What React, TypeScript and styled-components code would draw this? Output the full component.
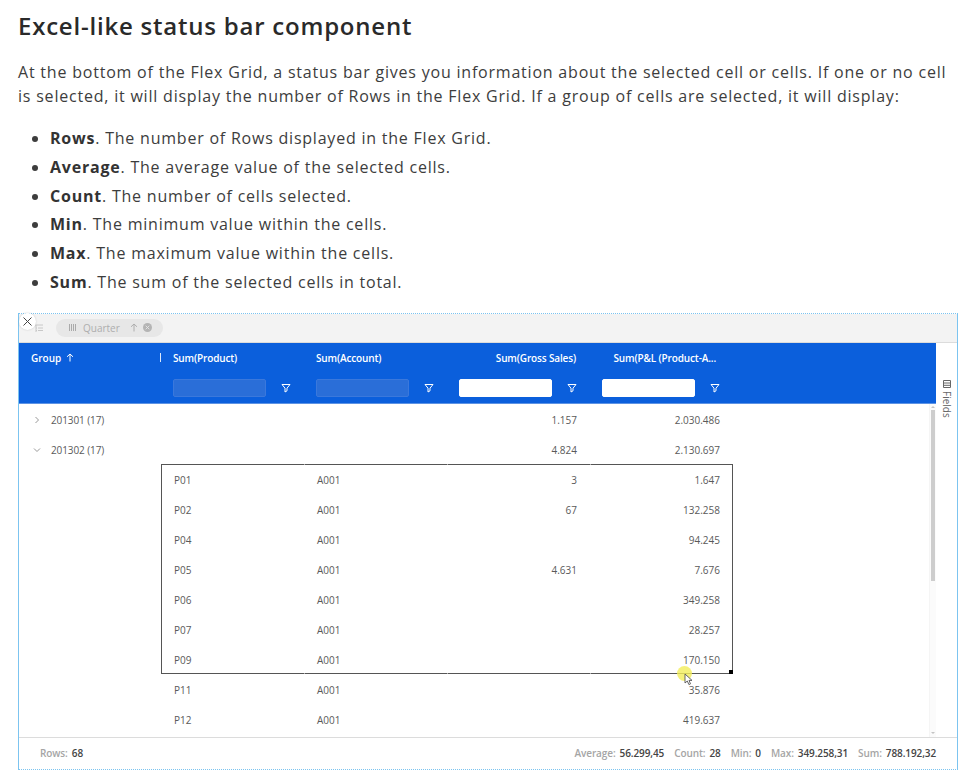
import React from 'react';
import styled, { createGlobalStyle } from 'styled-components';

const Global = createGlobalStyle`
  html, body { margin: 0; padding: 0; background: #fff; }
  body { font-family: "Open Sans", "Liberation Sans", sans-serif; width: 965px; height: 776px; overflow: hidden; }
`;
const Page = styled.div`padding: 11px 7px 0 18px; width: 965px; box-sizing: border-box;`;
const Title = styled.h2`margin: 0; font-size: 24px; line-height: 30px; font-weight: 600; letter-spacing: 0.78px; color: #2a2a2a;`;
const Intro = styled.p`margin: 19px 0 0; font-size: 16px; line-height: 24px; letter-spacing: 0.79px; color: #3d3d3d; width: 940px; white-space: nowrap;`;
const Bullets = styled.ul`margin: 16px 0 0; padding: 0 0 0 32px; list-style: disc; font-size: 16px; line-height: 28.8px; letter-spacing: 0.78px; color: #3d3d3d;`;
const Strong = styled.strong`font-weight: 700; color: #333;`;

const Widget = styled.div`
  position: relative; margin-top: 16px; width: 940px; height: 457px; box-sizing: border-box;
  border: 1px dotted #7cc4f0; border-left: 1px solid #7cc4f0; border-right: 1px solid #7cc4f0;
  display: flex; flex-direction: column;
`;
const GroupBar = styled.div`height: 29px; box-sizing: border-box; background: #f3f3f3; border-bottom: 1px solid #dcdcdc; display: flex; align-items: center; padding-left: 16px; gap: 13px; flex: none;`;
const BarIcon = styled.svg`width: 8px; height: 9px; color: #c8c8c8; flex: none; margin-top: 2px;`;
const Chip = styled.div`height: 18px; width: 107px; border-radius: 9px; background: #e7e7e7; display: flex; align-items: center; padding: 0 11px 0 13px; box-sizing: border-box; font-size: 10px; color: #aeaeae; gap: 5px;`;
const Grip = styled.svg`width: 7px; height: 7px; flex: none; margin-right: 2px;`;
const ChipText = styled.span`flex: 1;`;
const Middle = styled.div`display: flex; flex: 1; min-height: 0;`;
const Main = styled.div`flex: 1; display: flex; flex-direction: column; min-width: 0;`;
const Side = styled.div`width: 21px; flex: none; display: flex; justify-content: center; padding-top: 37px; box-sizing: border-box;`;
const SideLabel = styled.div`writing-mode: vertical-rl; display: flex; align-items: center; gap: 3px; font-size: 10px; color: #666; height: 40px;`;
const Header = styled.div`background: #0b5fdc; height: 61px; border-bottom: 1px solid #5d93e4; box-sizing: border-box; flex: none;`;
const Columns = styled.div`display: grid; grid-template-columns: 142px 143px 143px 143px 143px 1fr;`;
const HeadRow = styled(Columns)`height: 30px; align-items: center;`;
const FilterRow = styled(Columns)`height: 24px; margin-top: 6px; align-items: start;`;
const HeadCell = styled.div<{ $right?: boolean; $end?: number }>`
  position: relative; color: #fff; font-size: 10px; font-weight: 600; letter-spacing: -0.14px;
  padding: 0 ${p => p.$end ?? 13}px 0 12px; white-space: nowrap; display: flex; align-items: center; gap: 5px;
  justify-content: ${p => (p.$right ? 'flex-end' : 'flex-start')};
`;
const GroupHead = styled(HeadCell)`padding-left: 12px; letter-spacing: 0;`;
const Resizer = styled.span`position: absolute; right: 0; top: 2px; width: 1px; height: 9px; background: #dbe7fa;`;
const FilterCell = styled.div`display: flex; align-items: center; padding-left: 12px; gap: 15px;`;
const FilterInput = styled.div<{ $light?: boolean }>`width: 93px; height: 18px; border-radius: 2px; box-sizing: border-box; background: ${p => (p.$light ? '#fff' : '#2a6ed8')}; border: 1px solid ${p => (p.$light ? '#fff' : '#3a78dc')};`;
const FilterIcon = styled.svg`width: 10px; height: 10px; color: #fff; flex: none;`;
const Body = styled.div`position: relative; flex: 1; padding-top: 1px; background: #fff; min-height: 0; overflow: hidden;`;
const Row = styled(Columns)`height: 30px; align-items: center; font-size: 10px; color: #5a5a5a;`;
const Cell = styled.div<{ $right?: boolean }>`padding: 0 13px 0 13px; text-align: ${p => (p.$right ? 'right' : 'left')}; white-space: nowrap;`;
const GroupCell = styled.div`display: flex; align-items: center; padding-left: 14px; gap: 10px; letter-spacing: -0.1px;`;
const Chevron = styled.svg`width: 8px; height: 8px; color: #999; flex: none;`;
const ScrollTrack = styled.div`position: absolute; right: 0; top: 0; bottom: 0; width: 7px; background: #fbfbfb; border-left: 1px solid #f5f5f5; box-sizing: border-box;`;
const ScrollThumb = styled.div`position: absolute; right: 1px; top: 6px; width: 4px; height: 171px; background: #cdcdcd;`;
const ScrollArrow = styled.div<{ $down?: boolean }>`
  position: absolute; right: 1px; width: 0; height: 0; border-left: 2px solid transparent; border-right: 2px solid transparent;
  ${p => (p.$down ? 'bottom: 3px; border-top: 2px solid #c4c4c4;' : 'top: 2px; border-bottom: 2px solid #c4c4c4;')}
`;
const Selection = styled.div`position: absolute; left: 142px; top: 60px; width: 572px; height: 210px; box-sizing: border-box; border: 1px solid #555;`;
const Gap = styled.span<{ $left: number }>`position: absolute; left: ${p => p.$left}px; top: -1px; bottom: -1px; width: 1px; background: linear-gradient(#aaa 1px, transparent 1px, transparent calc(100% - 1px), #aaa calc(100% - 1px));`;
const Handle = styled.div`position: absolute; right: -1px; bottom: -1px; width: 4px; height: 4px; background: #000;`;
const Spot = styled.div`position: absolute; left: 658px; top: 262px; width: 15px; height: 15px; border-radius: 50%; background: rgba(243, 238, 90, 0.8);`;
const Cursor = styled.svg`position: absolute; left: 665px; top: 269px; width: 9px; height: 13px;`;
const Footer = styled.div`height: 31px; flex: none; border-top: 1px solid #dcdcdc; display: flex; align-items: center; justify-content: space-between; padding: 0 21px; font-size: 10px; font-weight: 600; letter-spacing: -0.1px; color: #444;`;
const Stats = styled.div`display: flex; gap: 10px;`;
const Stat = styled.span`display: inline-flex; gap: 4px;`;
const Label = styled.span`color: #a5a5a5;`;
const Close = styled.div`position: absolute; left: 0; top: -1px; width: 17px; height: 17px; border-radius: 50%; background: #fff; box-shadow: 0 0 2px rgba(0,0,0,.18); display: flex; align-items: center; justify-content: center;`;
const CloseIcon = styled.svg`width: 11px; height: 11px; color: #444;`;

const Filter = () => (
  <FilterIcon viewBox="0 0 10 10"><path d="M1 1.5h8L6 5.2v2.6L4 9V5.2z" fill="none" stroke="currentColor" strokeWidth="1" /></FilterIcon>
);
const Up = () => (
  <svg width="8" height="9" viewBox="0 0 8 9"><path d="M4 8.5V1M1 3.8 4 1l3 2.8" fill="none" stroke="currentColor" strokeWidth="1" /></svg>
);

const rows = [
  ['P01', 'A001', '3', '1.647'], ['P02', 'A001', '67', '132.258'], ['P04', 'A001', '', '94.245'],
  ['P05', 'A001', '4.631', '7.676'], ['P06', 'A001', '', '349.258'], ['P07', 'A001', '', '28.257'],
  ['P09', 'A001', '', '170.150'], ['P11', 'A001', '', '35.876'], ['P12', 'A001', '', '419.637'],
];
const bullets = [
  ['Rows', ' The number of Rows displayed in the Flex Grid.'],
  ['Average', ' The average value of the selected cells.'],
  ['Count', ' The number of cells selected.'],
  ['Min', ' The minimum value within the cells.'],
  ['Max', ' The maximum value within the cells.'],
  ['Sum', ' The sum of the selected cells in total.'],
];
const stats = [['Average:', '56.299,45'], ['Count:', '28'], ['Min:', '0'], ['Max:', '349.258,31'], ['Sum:', '788.192,32']];

export default function App() {
  return (
    <Page>
      <Global />
      <Title>Excel-like status bar component</Title>
      <Intro>
        At the bottom of the Flex Grid, a status bar gives you information about the selected cell or cells. If one or no cell<br />
        is selected, it will display the number of Rows in the Flex Grid. If a group of cells are selected, it will display:
      </Intro>
      <Bullets>
        {bullets.map(([a, b]) => <li key={a}><Strong>{a}</Strong>.{b}</li>)}
      </Bullets>
      <Widget>
        <GroupBar>
          <BarIcon viewBox="0 0 8 9"><path d="M0 1h8M3 4h5M3 6.5h5M1 1v7M1 4h1M1 6.5h1" fill="none" stroke="currentColor" /></BarIcon>
          <Chip>
            <Grip viewBox="0 0 7 7"><path d="M.5 0v7M2.5 0v7M4.5 0v7M6.5 0v7" stroke="#aaa" /></Grip>
            <ChipText>Quarter</ChipText>
            <Up />
            <svg width="9" height="9" viewBox="0 0 10 10"><circle cx="5" cy="5" r="5" fill="#b4b4b4" /><path d="M3 3l4 4M7 3 3 7" stroke="#e7e7e7" /></svg>
          </Chip>
        </GroupBar>
        <Middle>
          <Main>
            <Header>
              <HeadRow>
                <GroupHead>Group <Up /><Resizer /></GroupHead>
                <HeadCell>Sum(Product)</HeadCell>
                <HeadCell>Sum(Account)</HeadCell>
                <HeadCell $right $end={14}>Sum(Gross Sales)</HeadCell>
                <HeadCell $right $end={17}>Sum(P&amp;L (Product-A...</HeadCell>
              </HeadRow>
              <FilterRow>
                <div />
                <FilterCell><FilterInput /><Filter /></FilterCell>
                <FilterCell><FilterInput /><Filter /></FilterCell>
                <FilterCell><FilterInput $light /><Filter /></FilterCell>
                <FilterCell><FilterInput $light /><Filter /></FilterCell>
              </FilterRow>
            </Header>
            <Body>
              <Row>
                <GroupCell><Chevron viewBox="0 0 8 8"><path d="M2.5 1 5.5 4 2.5 7" fill="none" stroke="currentColor" /></Chevron>201301 (17)</GroupCell>
                <Cell /><Cell />
                <Cell $right>1.157</Cell><Cell $right>2.030.486</Cell>
              </Row>
              <Row>
                <GroupCell><Chevron viewBox="0 0 8 8"><path d="M1 2.5 4 5.5 7 2.5" fill="none" stroke="currentColor" /></Chevron>201302 (17)</GroupCell>
                <Cell /><Cell />
                <Cell $right>4.824</Cell><Cell $right>2.130.697</Cell>
              </Row>
              {rows.map(r => (
                <Row key={r[0]}>
                  <div />
                  <Cell>{r[0]}</Cell><Cell>{r[1]}</Cell>
                  <Cell $right>{r[2]}</Cell><Cell $right>{r[3]}</Cell>
                </Row>
              ))}
              <ScrollTrack><ScrollArrow /><ScrollThumb /><ScrollArrow $down /></ScrollTrack>
              <Selection>
                <Gap $left={142} /><Gap $left={285} /><Gap $left={428} />
                <Handle />
              </Selection>
              <Spot />
              <Cursor viewBox="0 0 9 13"><path d="M1 1v9l2.3-2 1.6 3.6 1.6-.7L5 7.4h3z" fill="#fff" stroke="#555" strokeWidth=".9" /></Cursor>
            </Body>
          </Main>
          <Side>
            <SideLabel>
              <svg width="8" height="8" viewBox="0 0 8 8"><path d="M.5.5h7v7h-7zM.5 3h7M.5 5.3h7" fill="none" stroke="#666" /></svg>
              Fields
            </SideLabel>
          </Side>
        </Middle>
        <Footer>
          <Stat><Label>Rows:</Label> 68</Stat>
          <Stats>
            {stats.map(([l, v]) => <Stat key={l}><Label>{l}</Label>{v}</Stat>)}
          </Stats>
        </Footer>
        <Close><CloseIcon viewBox="0 0 11 11"><path d="M1.5 1.5l8 8M9.5 1.5l-8 8" stroke="currentColor" fill="none" /></CloseIcon></Close>
      </Widget>
    </Page>
  );
}
